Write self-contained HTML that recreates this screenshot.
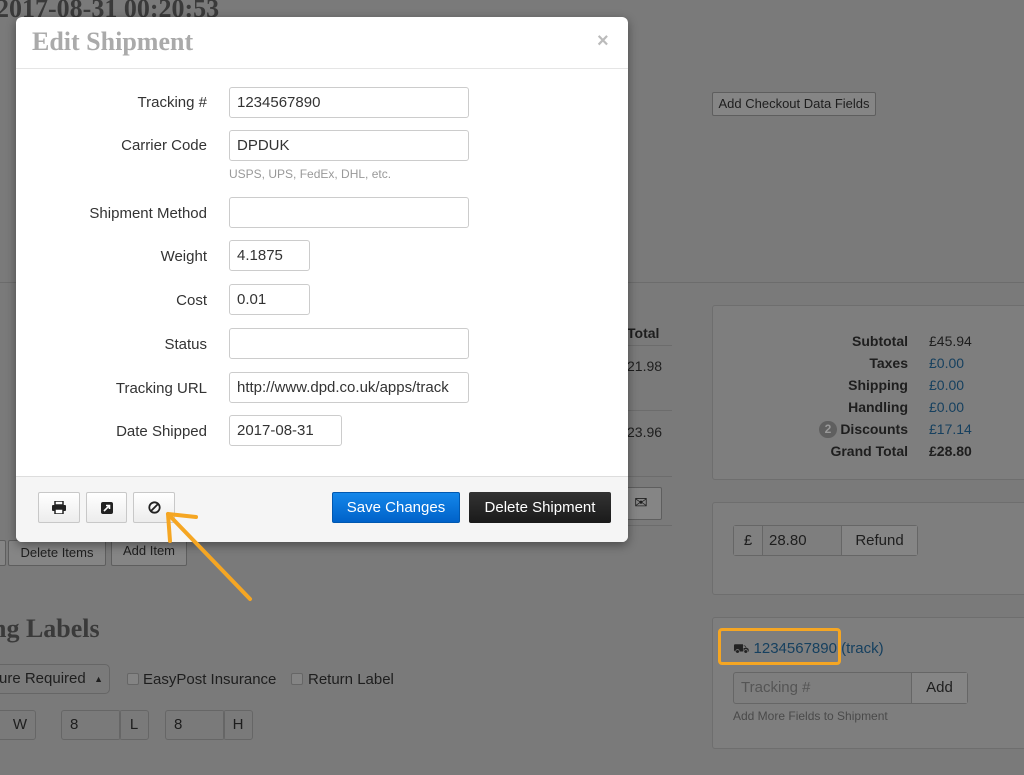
<!DOCTYPE html>
<html><head><meta charset="utf-8"><style>
*{box-sizing:border-box;margin:0;padding:0}
body{width:1024px;height:775px;overflow:hidden;background:#7a7a7a;font-family:"Liberation Sans",sans-serif;position:relative;color:#1e1e1e}
.a{position:absolute}
.bg{color:#222}
.pnl{position:absolute;border:1px solid #6e6e6e;background:#7e7e7e;border-radius:3px}
.bbtn{position:absolute;border:1px solid #5e5e5e;background:#858585;border-radius:2px;font-size:13px;color:#1e1e1e;text-align:center}
.lbl{position:absolute;right:817px;font-size:15px;color:#333;text-align:right;white-space:nowrap}
.in{position:absolute;left:229px;height:31px;border:1px solid #ccc;border-radius:3px;font-size:15px;color:#333;padding:6px 7px;white-space:nowrap;overflow:hidden;background:#fff}
.ib{position:absolute;top:492px;height:31px;border:1px solid #c8c8c8;border-radius:2px;background:linear-gradient(#fff,#ececec);display:flex;align-items:center;justify-content:center}
.r{position:absolute;font-size:14px;white-space:nowrap}
.bl{color:#16405f}
</style></head><body>
<div class="a bg" style="left:-4px;top:-6px;font:bold 26px 'Liberation Serif',serif;color:#3a3a3a">2017-08-31 00:20:53</div>
<div class="bbtn" style="left:712px;top:92px;width:164px;height:24px;line-height:22px">Add Checkout Data Fields</div>
<div class="a" style="left:0;top:282px;width:1024px;height:1px;background:#6c6c6c"></div>
<div class="a" style="left:627px;top:325px;font-weight:bold;font-size:14px">Total</div>
<div class="a" style="left:627px;top:345px;width:45px;height:1px;background:#6c6c6c"></div>
<div class="a" style="left:627px;top:358px;font-size:14px">21.98</div>
<div class="a" style="left:627px;top:410px;width:45px;height:1px;background:#6c6c6c"></div>
<div class="a" style="left:627px;top:424px;font-size:14px">23.96</div>
<div class="a" style="left:627px;top:476px;width:45px;height:1px;background:#6c6c6c"></div>
<div class="bbtn" style="left:620px;top:487px;width:42px;height:33px;line-height:31px;font-size:16px">✉</div>
<div class="a" style="left:627px;top:525px;width:45px;height:1px;background:#6c6c6c"></div>
<div class="bbtn" style="left:-10px;top:540px;width:16px;height:26px"></div>
<div class="bbtn" style="left:8px;top:540px;width:98px;height:26px;line-height:24px">Delete Items</div>
<div class="bbtn" style="left:111px;top:538px;width:76px;height:28px;line-height:24px">Add Item</div>

<div class="pnl" style="left:712px;top:305px;width:330px;height:175px"></div>
<div class="r" style="right:116px;top:330px;font-weight:bold;line-height:22px;text-align:right">Subtotal<br>Taxes<br>Shipping<br>Handling<br><span style="display:inline-block;background:#5f5f5f;color:#999;border-radius:9px;padding:0 6px;font-size:12px;line-height:17px;margin-right:3px;vertical-align:1px">2</span>Discounts<br>Grand Total</div>
<div class="r" style="left:929px;top:330px;line-height:22px">£45.94<br><span class="bl">£0.00</span><br><span class="bl">£0.00</span><br><span class="bl">£0.00</span><br><span class="bl">£17.14</span><br><b>£28.80</b></div>

<div class="pnl" style="left:712px;top:502px;width:330px;height:93px"></div>
<div class="a" style="left:733px;top:525px;width:185px;height:31px;border:1px solid #666;border-radius:3px;display:flex;font-size:15px">
<div style="width:29px;background:#808080;border-right:1px solid #666;text-align:center;line-height:29px">£</div>
<div style="width:79px;line-height:29px;padding-left:6px;border-right:1px solid #666">28.80</div>
<div style="flex:1;background:#858585;text-align:center;line-height:29px">Refund</div></div>

<div class="pnl" style="left:712px;top:617px;width:330px;height:132px"></div>
<div class="a" style="left:718px;top:628px;width:123px;height:37px;border:3px solid #f5a623;border-radius:4px"></div>
<div class="a" style="left:733px;top:640px;font-size:15px;color:#16405f;white-space:nowrap"><span style="color:#222;font-size:13px">⛟</span> 1234567890 (track)</div>
<div class="a" style="left:733px;top:672px;width:235px;height:32px;border:1px solid #666;border-radius:3px;display:flex;font-size:15px">
<div style="width:178px;line-height:30px;padding-left:7px;color:#555;border-right:1px solid #666">Tracking #</div>
<div style="flex:1;background:#858585;text-align:center;line-height:30px">Add</div></div>
<div class="a" style="left:733px;top:709px;font-size:12px;color:#4a4a4a">Add More Fields to Shipment</div>

<div class="a" style="left:-8px;top:614px;font:bold 26px 'Liberation Serif',serif;color:#3a3a3a">ng Labels</div>
<div class="a" style="left:-20px;top:664px;width:130px;height:30px;border:1px solid #666;border-radius:5px;font-size:15px;line-height:28px;padding-left:18px">ure Required <span style="font-size:9px;position:absolute;right:6px">▲<br></span></div>
<div class="a" style="left:127px;top:673px;width:12px;height:12px;border:1px solid #666;border-radius:2px;background:#848484"></div>
<div class="a" style="left:143px;top:671px;font-size:15px">EasyPost Insurance</div>
<div class="a" style="left:291px;top:673px;width:12px;height:12px;border:1px solid #666;border-radius:2px;background:#848484"></div>
<div class="a" style="left:308px;top:671px;font-size:15px">Return Label</div>
<div class="a" style="left:-10px;top:710px;width:46px;height:30px;border:1px solid #666;border-radius:3px;font-size:15px;line-height:28px;text-align:right;padding-right:8px">W</div>
<div class="a" style="left:61px;top:710px;width:60px;height:30px;border:1px solid #666;border-radius:3px;font-size:15px;line-height:28px;padding-left:8px">8</div>
<div class="a" style="left:119px;top:710px;width:30px;height:30px;border:1px solid #666;border-radius:3px;font-size:15px;line-height:28px;text-align:center">L</div>
<div class="a" style="left:165px;top:710px;width:60px;height:30px;border:1px solid #666;border-radius:3px;font-size:15px;line-height:28px;padding-left:8px">8</div>
<div class="a" style="left:223px;top:710px;width:30px;height:30px;border:1px solid #666;border-radius:3px;font-size:15px;line-height:28px;text-align:center">H</div>

<!-- modal -->
<div class="a" style="left:16px;top:17px;width:612px;height:525px;background:#fff;border-radius:6px;box-shadow:0 3px 10px rgba(0,0,0,.4);overflow:hidden">
<div class="a" style="left:16px;top:10px;font:bold 26px 'Liberation Serif',serif;color:#aaa">Edit Shipment</div>
<div class="a" style="left:581px;top:13px;font-size:20px;color:#bbb;font-weight:bold">×</div>
<div class="a" style="left:0;top:51px;width:100%;height:1px;background:#e5e5e5"></div>
<div class="a" style="left:0;top:459px;width:100%;height:66px;background:#f5f5f5;border-top:1px solid #ddd"></div>
</div>
<div class="lbl" style="top:94px">Tracking #</div><div class="in" style="top:87px;width:240px">1234567890</div>
<div class="lbl" style="top:137px">Carrier Code</div><div class="in" style="top:130px;width:240px">DPDUK</div>
<div class="a" style="left:229px;top:167px;font-size:12px;color:#999">USPS, UPS, FedEx, DHL, etc.</div>
<div class="lbl" style="top:205px">Shipment Method</div><div class="in" style="top:197px;width:240px"></div>
<div class="lbl" style="top:248px">Weight</div><div class="in" style="top:240px;width:81px">4.1875</div>
<div class="lbl" style="top:292px">Cost</div><div class="in" style="top:284px;width:81px">0.01</div>
<div class="lbl" style="top:336px">Status</div><div class="in" style="top:328px;width:240px"></div>
<div class="lbl" style="top:380px">Tracking URL</div><div class="in" style="top:372px;width:240px">http://www.dpd.co.uk/apps/track</div>
<div class="lbl" style="top:423px">Date Shipped</div><div class="in" style="top:415px;width:113px">2017-08-31</div>

<div class="ib" style="left:38px;width:42px"><svg width="14" height="13" viewBox="0 0 14 13"><rect x="3" y="0" width="8" height="4" fill="none" stroke="#222" stroke-width="1.5"/><rect x="0" y="4" width="14" height="6" rx="1" fill="#222"/><rect x="3" y="8" width="8" height="5" fill="#fff" stroke="#222" stroke-width="1.5"/></svg></div>
<div class="ib" style="left:86px;width:41px"><svg width="12" height="12" viewBox="0 0 12 12"><rect width="12" height="12" rx="2" fill="#222"/><path d="M3 9L8 4M5 3.5H8.5V7" stroke="#fff" stroke-width="1.6" fill="none"/></svg></div>
<div class="ib" style="left:133px;width:42px"><svg width="13" height="13" viewBox="0 0 13 13"><circle cx="6.5" cy="6.5" r="5.2" fill="none" stroke="#222" stroke-width="1.8"/><path d="M3 10L10 3" stroke="#222" stroke-width="1.8"/></svg></div>
<div class="a" style="left:332px;top:492px;width:128px;height:31px;background:linear-gradient(#1487ea,#0062c9);border:1px solid #0058b0;border-radius:2px;color:#fff;font-size:15px;text-align:center;line-height:29px">Save Changes</div>
<div class="a" style="left:469px;top:492px;width:142px;height:31px;background:linear-gradient(#333,#1a1a1a);border-radius:2px;color:#fff;font-size:15px;text-align:center;line-height:31px">Delete Shipment</div>

<svg class="a" style="left:0;top:0" width="1024" height="775"><g stroke="#f5a623" stroke-width="4" fill="none" stroke-linecap="round"><path d="M250 599L168 514"/><path d="M168 514L170 541M168 514L196 517"/></g></svg>
</body></html>
